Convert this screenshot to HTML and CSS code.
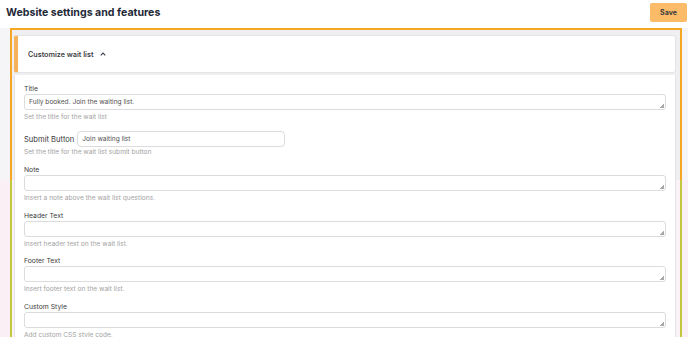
FILE: index.html
```html
<!DOCTYPE html>
<html lang="en">
<head>
  <meta charset="UTF-8">
  <meta name="viewport" content="width=device-width, initial-scale=1.0">
  <title>Website settings and features</title>
  <link rel="stylesheet" href="styles.css">
</head>
<body>

<header class="topbar">
  <h1>Website settings and features</h1>
  <button class="btn-save">Save</button>
</header>

<main class="page">
  <section class="outline">
    <div class="toggle-card">
      <span class="toggle-title">Customize wait list</span>
      <svg class="chevron" width="6" height="4" viewBox="0 0 6 4"><path d="M0.7 3.3 L3 1 L5.3 3.3" fill="none" stroke="#374151" stroke-width="1.1"/></svg>
    </div>

    <form class="panel">
      <div class="field">
        <label for="wlTitle">Title</label>
        <textarea id="wlTitle" rows="1">Fully booked. Join the waiting list.</textarea>
        <p class="hint">Set the title for the wait list</p>
      </div>

      <div class="field">
        <div class="inline-row">
          <label class="label-lg" for="wlButton">Submit Button</label>
          <input type="text" id="wlButton" value="Join waiting list">
        </div>
        <p class="hint hint-tight">Set the title for the wait list submit button</p>
      </div>

      <div class="field">
        <label for="wlNote">Note</label>
        <textarea id="wlNote" rows="1"></textarea>
        <p class="hint">Insert a note above the wait list questions.</p>
      </div>

      <div class="field">
        <label for="wlHeader">Header Text</label>
        <textarea id="wlHeader" rows="1"></textarea>
        <p class="hint">Insert header text on the wait list.</p>
      </div>

      <div class="field">
        <label for="wlFooter">Footer Text</label>
        <textarea id="wlFooter" rows="1"></textarea>
        <p class="hint">Insert footer text on the wait list.</p>
      </div>

      <div class="field">
        <label for="wlStyle">Custom Style</label>
        <textarea id="wlStyle" rows="1"></textarea>
        <p class="hint">Add custom CSS style code.</p>
      </div>
    </form>
  </section>
</main>

</body>
</html>
```

FILE: styles.css
```css
body {
  font-family: Inter, "Liberation Sans", sans-serif;
  margin: 0;
  padding: 0;
  background: #fff;
  color: #374151;
  height: 337px;
  overflow: hidden;
}

.topbar {
  display: flex;
  justify-content: space-between;
  align-items: center;
  height: 28px;
  padding: 0 1px 0 6px;
}
.topbar h1 {
  margin: 0 0 3px;
  font-size: 10.6px;
  font-weight: 700;
  color: #1f2937;
}
.btn-save {
  width: 37px;
  height: 19px;
  margin-bottom: 3px;
  border: 0;
  border-radius: 2px;
  background-color: #fcbb69;
  color: #3b3b3b;
  font-family: inherit;
  font-size: 7px;
  font-weight: 700;
  padding: 0;
}

.page {
  padding: 0 6px 0 10px;
  background: linear-gradient(#f5f5f7 0 152px, #fbeff6 152px);
  height: 309px;
}

.outline {
  height: 305px;
  padding: 5px 4px 0 2px;
  border: 2px solid #f5a623;
  border-image: linear-gradient(#f5a623 0 152px, #c3c83c 152px calc(100% - 3px), #f3c13c calc(100% - 3px)) 2;
  background: linear-gradient(#efeff2 0 150px, #fbf2f7 150px);
  overflow: hidden;
}

.toggle-card {
  display: flex;
  align-items: center;
  gap: 7px;
  height: 36px;
  padding-left: 10px;
  background: #fff;
  border: 1px solid #e4e4e7;
  border-left: 4px solid #f7b35c;
  border-radius: 3px;
}
.toggle-title {
  font-size: 7.2px;
  font-weight: 600;
  color: #3f3f46;
}
.chevron {
  margin-top: -1px;
}

.panel {
  margin-top: 2px;
  padding: 9px 9px 0 9px;
  background: #fff;
  border-left: 1px solid #e4e4e7;
  border-right: 1px solid #e4e4e7;
  height: 300px;
}

.field {
  margin-bottom: 8px;
}
.field:nth-child(n+3) {
  margin-bottom: 7.6px;
}
.field label {
  display: block;
  font-size: 6.8px;
  line-height: 10px;
  color: #404040;
}
.field textarea {
  display: block;
  box-sizing: border-box;
  width: 100%;
  height: 16px;
  min-height: 16px;
  margin: 0;
  padding: 2px 4px;
  border: 1px solid #dcdcde;
  border-radius: 3px;
  font-family: inherit;
  font-size: 6.6px;
  line-height: 10px;
  color: #505050;
  resize: vertical;
}
.field textarea::-webkit-resizer {
  background: linear-gradient(135deg, transparent 50%, #a8a8a8 50%) no-repeat right 1px bottom 1px / 4px 4px;
}
.hint {
  margin: 2px 0 0;
  font-size: 6.6px;
  line-height: 10px;
  color: #a3a3a3;
}
.hint-tight {
  margin-top: 0;
}

.inline-row {
  display: flex;
  align-items: center;
  gap: 3px;
  height: 17px;
}
.field .label-lg {
  font-size: 7.6px;
  color: #3a3a3a;
  padding-top: 2px;
}
.inline-row input {
  box-sizing: border-box;
  width: 208px;
  height: 16px;
  margin: 0;
  padding: 0 4px;
  border: 1px solid #dcdcde;
  border-radius: 4px;
  font-family: inherit;
  font-size: 6.6px;
  color: #505050;
}
```
